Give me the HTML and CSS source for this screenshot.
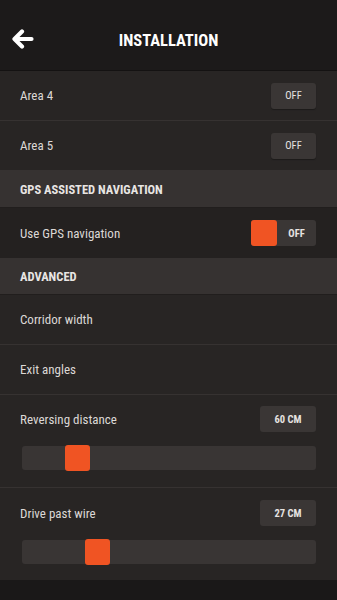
FILE: index.html
```html
<!DOCTYPE html>
<html>
<head>
<meta charset="utf-8">
<link rel="stylesheet" href="styles.css">
</head>
<body>
<div class="screen">
  <header class="topbar">
    <svg class="back" width="22" height="20" viewBox="0 0 22 20">
      <path d="M10 2.5 L2.5 10 L10 17.5 M3.5 10 H19.5" fill="none" stroke="#fff" stroke-width="4.2" stroke-linecap="round" stroke-linejoin="round"/>
    </svg>
    <h1 class="title">INSTALLATION</h1>
  </header>
  <div class="list">
    <div class="row">
      <span class="label">Area 4</span>
      <span class="btn">OFF</span>
    </div>
    <div class="row">
      <span class="label">Area 5</span>
      <span class="btn">OFF</span>
    </div>
    <div class="section">GPS ASSISTED NAVIGATION</div>
    <div class="row dark">
      <span class="label">Use GPS navigation</span>
      <span class="toggle"><span class="knob"></span><span class="tlabel">OFF</span></span>
    </div>
    <div class="section">ADVANCED</div>
    <div class="row">
      <span class="label">Corridor width</span>
    </div>
    <div class="row">
      <span class="label">Exit angles</span>
    </div>
    <div class="slider-row">
      <div class="slider-head">
        <span class="label">Reversing distance</span>
        <span class="value">60 CM</span>
      </div>
      <div class="track"><span class="thumb" style="margin-left:43px"></span></div>
    </div>
    <div class="slider-row last">
      <div class="slider-head">
        <span class="label">Drive past wire</span>
        <span class="value">27 CM</span>
      </div>
      <div class="track"><span class="thumb" style="margin-left:63px"></span></div>
    </div>
  </div>
  <div class="footer"></div>
</div>
</body>
</html>
```
FILE: styles.css
```css
* { box-sizing: border-box; }
html, body { margin: 0; padding: 0; background: #1a1818; }
body { font-family: "Roboto Condensed", "Liberation Sans Narrow", "DejaVu Sans Condensed", "Roboto", sans-serif; color: #e2dfdd; }
.screen { width: 337px; height: 600px; overflow: hidden; display: flex; flex-direction: column; }
.topbar { height: 71px; background: #1c1a1a; border-bottom: 1px solid #141212; display: flex; align-items: center; justify-content: center; position: relative; flex: none; }
.back { position: absolute; left: 12px; top: 29px; }
.title { margin: 0; font-size: 16.5px; font-weight: 700; color: #fff; padding-top: 11px; }
.list { display: flex; flex-direction: column; background: #282524; flex: none; }
.row { height: 50px; display: flex; align-items: center; justify-content: space-between; padding: 0 21px 0 20px; border-bottom: 1px solid #363231; }
.row.dark { background: #242120; border-bottom: none; }
.label { font-size: 13px; color: #dcd8d6; }
.btn { width: 45px; height: 26px; border-radius: 3px; background: #3a3635; display: flex; align-items: center; justify-content: center; font-size: 10.5px; color: #e6e3e1; box-shadow: 0 1px 1px rgba(0,0,0,0.3); }
.toggle { width: 65px; height: 26px; border-radius: 3px; background: #3a3635; display: flex; align-items: center; }
.knob { width: 26px; height: 26px; border-radius: 3px; background: #f05423; flex: none; }
.tlabel { flex: 1; text-align: center; font-size: 10.5px; font-weight: 700; color: #e6e3e1; }
.section { height: 37px; background: #363231; display: flex; align-items: center; padding: 0 20px; font-size: 12.5px; font-weight: 700; color: #e8e5e3; border-bottom: 1px solid #211e1d; }
.slider-row { height: 93px; padding: 11px 21px 0 22px; border-bottom: 1px solid #363231; display: flex; flex-direction: column; }
.slider-row.last { border-bottom: none; height: 92px; padding-top: 12px; }
.slider-head { display: flex; justify-content: space-between; align-items: center; height: 26px; }
.slider-head .label { margin-left: -2px; }
.value { width: 56px; height: 26px; border-radius: 3px; background: #3a3635; display: flex; align-items: center; justify-content: center; font-size: 10.5px; font-weight: 700; color: #e6e3e1; }
.track { margin-top: 14px; height: 24px; border-radius: 3px; background: #393534; display: flex; align-items: center; }
.thumb { width: 25px; height: 26px; border-radius: 3px; background: #f05423; display: block; }
.footer { flex: 1; background: #1a1818; }
```
